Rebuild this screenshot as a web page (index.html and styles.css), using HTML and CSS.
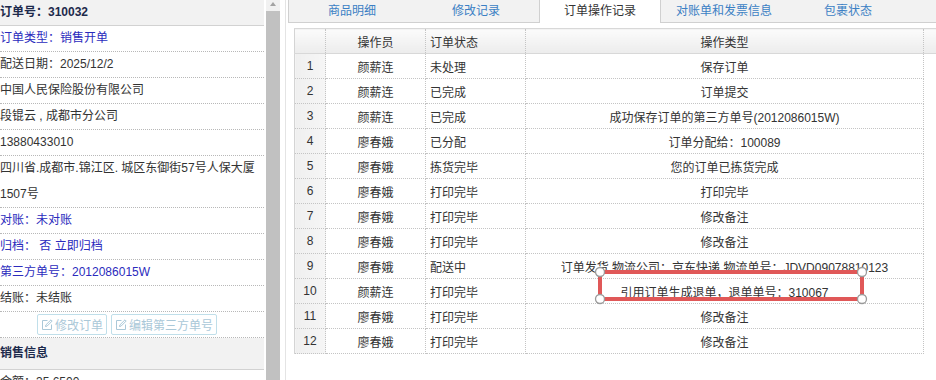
FILE: index.html
```html
<!DOCTYPE html>
<html lang="zh-CN">
<head>
    <meta charset="UTF-8">
    <title>订单操作记录</title>
    <link rel="stylesheet" href="styles.css">
</head>
<body>
<div class="page">
    <!-- order summary on the left -->
    <aside class="side">
        <div class="side-head">订单号：310032</div>
        <div class="info blue">订单类型：销售开单</div>
        <div class="info">配送日期：2025/12/2</div>
        <div class="info">中国人民保险股份有限公司</div>
        <div class="info">段锟云 , 成都市分公司</div>
        <div class="info">13880433010</div>
        <div class="info addr">四川省.成都市.锦江区. 城区东御街57号人保大厦<br>1507号</div>
        <div class="info blue">对账：未对账</div>
        <div class="info blue">归档：&nbsp;否 立即归档</div>
        <div class="info blue">第三方单号：2012086015W</div>
        <div class="info">结账：未结账</div>
        <div class="info actions">
            <button class="btn" disabled>
                <svg width="12" height="12" viewBox="0 0 12 12"><path d="M6.5 1.5H1.5v9h9v-5" fill="none" stroke="currentColor"/><path d="M4.5 7.5l.4-1.6L10 .8l1.2 1.2-5.1 5.1z" fill="none" stroke="currentColor"/></svg>
                修改订单
            </button>
            <button class="btn" disabled>
                <svg width="12" height="12" viewBox="0 0 12 12"><path d="M6.5 1.5H1.5v9h9v-5" fill="none" stroke="currentColor"/><path d="M4.5 7.5l.4-1.6L10 .8l1.2 1.2-5.1 5.1z" fill="none" stroke="currentColor"/></svg>
                编辑第三方单号
            </button>
        </div>
        <div class="side-head sales">销售信息</div>
        <div class="info">金额：35.6500</div>
    </aside>

    <div class="scrollbar">
        <div class="scroll-up"></div>
    </div>

    <!-- tabs and the operation log grid -->
    <main class="main">
        <div class="tabs">
            <div class="tab">商品明细</div>
            <div class="tab">修改记录</div>
            <div class="tab active">订单操作记录</div>
            <div class="tab">对账单和发票信息</div>
            <div class="tab">包裹状态</div>
        </div>

        <div class="grid">
            <table>
                <colgroup>
                    <col style="width:31px">
                    <col style="width:100px">
                    <col style="width:100px">
                    <col style="width:398px">
                    <col>
                </colgroup>
                <thead>
                    <tr>
                        <th class="rn"></th>
                        <th>操作员</th>
                        <th class="left">订单状态</th>
                        <th>操作类型</th>
                        <th class="pad"></th>
                    </tr>
                </thead>
                <tbody>
                    <tr><td class="rn">1</td><td>颜薪连</td><td class="left">未处理</td><td>保存订单</td><td class="pad"></td></tr>
                    <tr><td class="rn">2</td><td>颜薪连</td><td class="left">已完成</td><td>订单提交</td><td class="pad"></td></tr>
                    <tr><td class="rn">3</td><td>颜薪连</td><td class="left">已完成</td><td>成功保存订单的第三方单号(2012086015W)</td><td class="pad"></td></tr>
                    <tr><td class="rn">4</td><td>廖春娥</td><td class="left">已分配</td><td>订单分配给：100089</td><td class="pad"></td></tr>
                    <tr><td class="rn">5</td><td>廖春娥</td><td class="left">拣货完毕</td><td>您的订单已拣货完成</td><td class="pad"></td></tr>
                    <tr><td class="rn">6</td><td>廖春娥</td><td class="left">打印完毕</td><td>打印完毕</td><td class="pad"></td></tr>
                    <tr><td class="rn">7</td><td>廖春娥</td><td class="left">打印完毕</td><td>修改备注</td><td class="pad"></td></tr>
                    <tr><td class="rn">8</td><td>廖春娥</td><td class="left">打印完毕</td><td>修改备注</td><td class="pad"></td></tr>
                    <tr><td class="rn">9</td><td>廖春娥</td><td class="left">配送中</td><td>订单发货,物流公司：京东快递,物流单号：JDVD09078810123</td><td class="pad"></td></tr>
                    <tr><td class="rn">10</td><td>颜薪连</td><td class="left">打印完毕</td><td>引用订单生成退单，退单单号：310067</td><td class="pad"></td></tr>
                    <tr><td class="rn">11</td><td>廖春娥</td><td class="left">打印完毕</td><td>修改备注</td><td class="pad"></td></tr>
                    <tr><td class="rn">12</td><td>廖春娥</td><td class="left">打印完毕</td><td>修改备注</td><td class="pad"></td></tr>
                </tbody>
            </table>

            <!-- highlight drawn over row 10 -->
            <svg class="mark" width="274" height="39" viewBox="0 0 274 39">
                <rect x="6" y="6" width="262" height="27" rx="2" fill="none" stroke="#e05858" stroke-width="4"/>
                <circle cx="6" cy="6" r="4.5" fill="#fff" stroke="#9a9a9a" stroke-width="1.3"/>
                <circle cx="268" cy="6" r="4.5" fill="#fff" stroke="#9a9a9a" stroke-width="1.3"/>
                <circle cx="6" cy="33" r="4.5" fill="#fff" stroke="#9a9a9a" stroke-width="1.3"/>
                <circle cx="268" cy="33" r="4.5" fill="#fff" stroke="#9a9a9a" stroke-width="1.3"/>
            </svg>
        </div>
    </main>
</div>
</body>
</html>
```

FILE: styles.css
```css
body {
    margin: 0;
    font-family: "Liberation Sans", "Noto Sans CJK SC", sans-serif;
    font-size: 12px;
    color: #333;
    background-color: #fff;
}
.page {
    display: flex;
    height: 380px;
    overflow: hidden;
}

/* left summary panel */
.side {
    width: 264px;
    flex: none;
}
.side-head {
    height: 25px;
    line-height: 25px;
    background-color: #f2f2f2;
    border-bottom: 1px solid #d2d2d2;
    font-weight: bold;
    color: #1d2a4c;
}
.side-head.sales {
    height: 31px;
    line-height: 31px;
}
.info {
    line-height: 25px;
    border-bottom: 1px dotted #b8b8b8;
    white-space: nowrap;
}
.info.addr {
    line-height: 25.5px;
}
.blue {
    color: #2b2bbd;
}
.actions {
    height: 25px;
    display: flex;
    align-items: center;
    justify-content: center;
    gap: 4px;
    padding-right: 10px;
}
.btn {
    height: 21px;
    display: inline-flex;
    align-items: center;
    gap: 2px;
    padding: 0 3px;
    border: 1px solid #c0dfea;
    border-radius: 2px;
    background-color: #fff;
    color: #aac8d8;
    font-family: inherit;
    font-size: 12px;
}

/* fake scrollbar of the panel */
.scrollbar {
    width: 14px;
    flex: none;
    margin-left: 2px;
    background-color: #c1c1c1;
}
.scroll-up {
    height: 11px;
    background-color: #f1f1f1;
    position: relative;
}
.scroll-up::after {
    content: "";
    position: absolute;
    left: 4px;
    top: 2px;
    border-left: 3px solid transparent;
    border-right: 3px solid transparent;
    border-bottom: 4px solid #a3a3a3;
}

.main {
    flex: 1;
    margin-left: 5px;
    padding-left: 2px;
    border-left: 1px solid #e4e4e4;
    min-width: 0;
}

/* tabs */
.tabs {
    display: flex;
    height: 22px;
    padding-left: 2px;
    background-color: #f2f2f2;
    border-left: 1px solid #d0d0d0;
    border-bottom: 1px solid #d0d0d0;
}
.tab {
    width: 122px;
    margin-right: 2px;
    line-height: 22px;
    text-align: center;
    color: #3b7fc4;
    white-space: nowrap;
}
.tab.active {
    height: 23px;
    background-color: #fff;
    color: #333;
    border-left: 1px solid #d0d0d0;
    border-right: 1px solid #d0d0d0;
    box-sizing: border-box;
}

/* grid */
.grid {
    position: relative;
    margin: 5px 0 0 6px;
}
table {
    width: 100%;
    border-collapse: collapse;
    table-layout: fixed;
}
th, td {
    height: 24px;
    padding: 0 4px;
    border: 1px dotted #c4c4c4;
    font-weight: normal;
    text-align: center;
    white-space: nowrap;
    color: #333;
}
th {
    background: linear-gradient(#fbfbfb, #ececec);
    border-top: 1px solid #d8d8d8;
    border-bottom: 1px solid #d8d8d8;
}
th.left, td.left {
    text-align: left;
}
td.rn {
    background: linear-gradient(to right, #efefef, #f6f6f6);
    border-left: 1px solid #d4d4d4;
}
th.rn {
    border-left: 1px solid #d4d4d4;
}
td.pad {
    border: none;
}
th.pad {
    border-right: none;
}
.mark {
    position: absolute;
    left: 300px;
    top: 238px;
}
```
